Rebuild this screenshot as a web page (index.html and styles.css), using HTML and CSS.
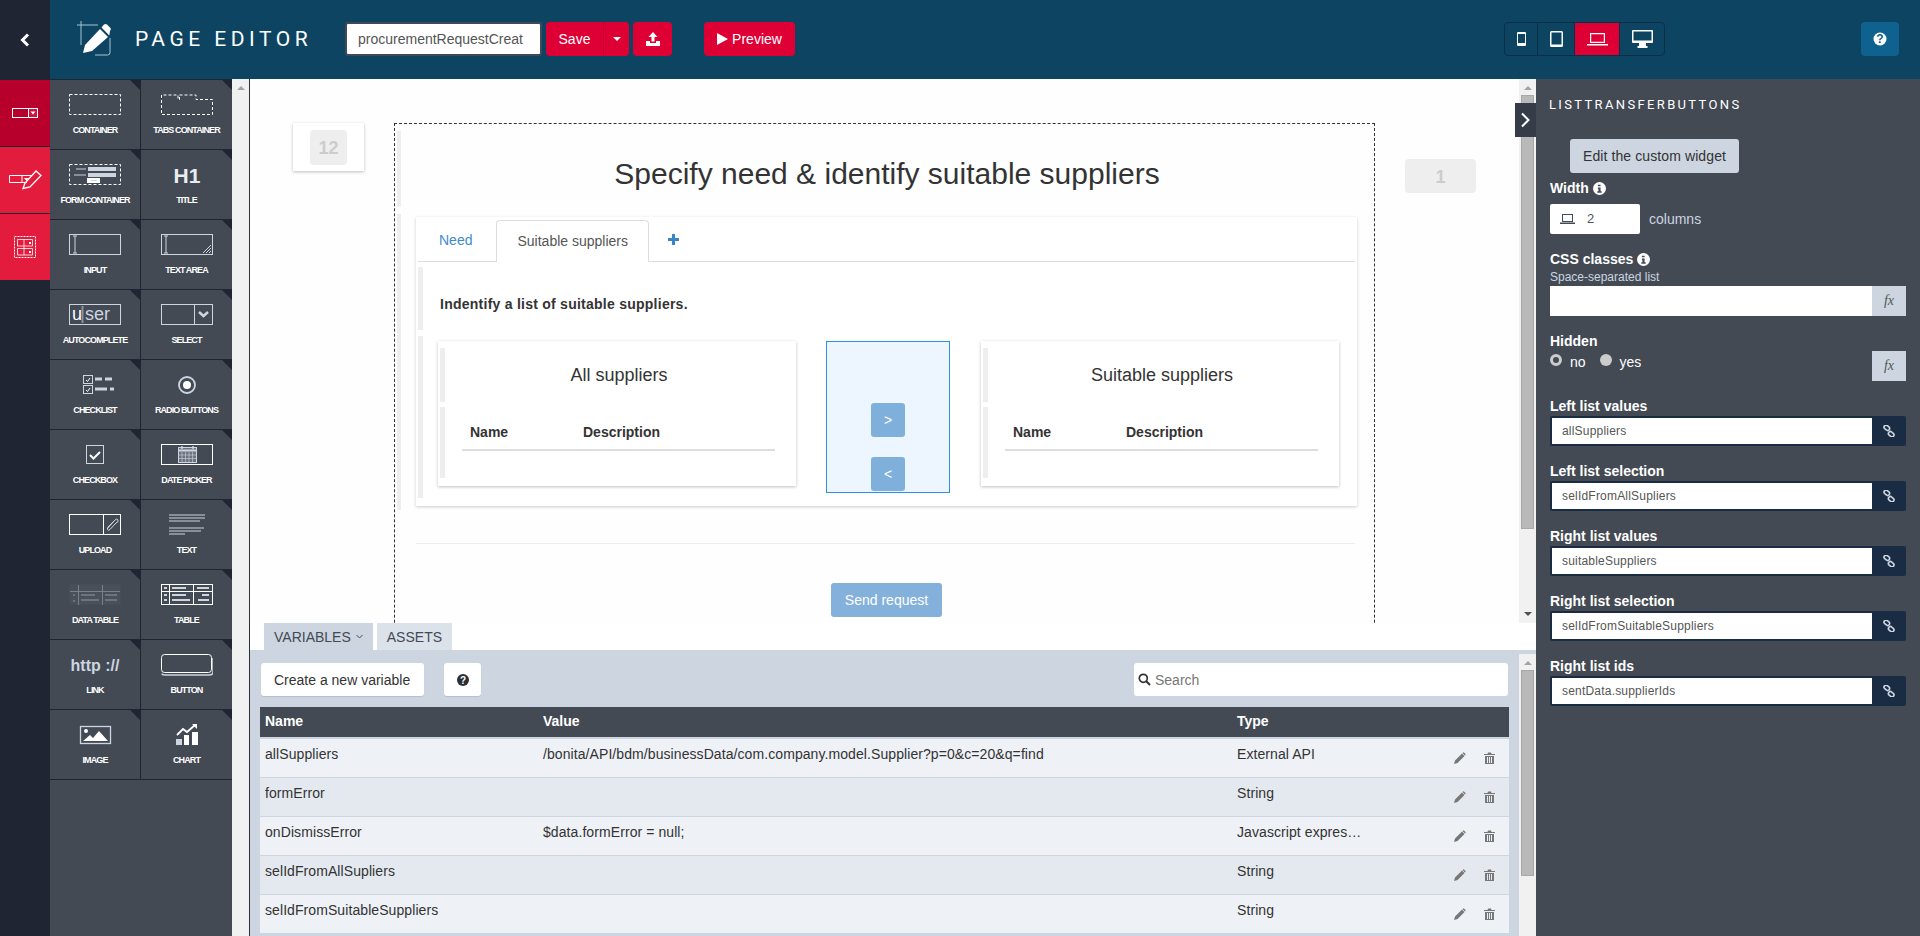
FILE: index.html
```html
<!DOCTYPE html>
<html lang="en">

<head>
    <meta charset="UTF-8">
    <title>Page editor</title>
    <link rel="stylesheet" href="styles.css">
</head>

<body>
    <div class="topbar">
        <div class="back">
            <svg width="12" height="14" viewBox="0 0 12 14"><path d="M9 1.500 3.500 7 9 12.500" fill="none" stroke="#fff" stroke-width="3"/></svg>
        </div>
        <svg class="logo" width="36" height="36" viewBox="0 0 36 36">
            <path d="M1 5H22M5 1V25" fill="none" stroke="#a9c4d4" stroke-width="1"/>
            <path d="M19 35H31.500Q34 35 34 32.500V18" fill="none" stroke="#a9c4d4" stroke-width="1"/>
            <path d="M7 33 9 25 24 9 32 17 16 31Z M25.500 7.500 28 4.500Q29.500 3.500 31 4.500L34.500 8Q35.500 9.500 34 11L33.300 15.500Z" fill="#fff"/>
        </svg>
        <div class="app-name">PAGE EDITOR</div>
        <input class="page-name" type="text" value="procurementRequestCreat">
        <div class="btn-group">
            <button class="btn-red btn-save">Save</button>
            <button class="btn-red btn-caret"><span class="caret"></span></button>
        </div>
        <button class="btn-red btn-export">
            <svg width="14" height="14" viewBox="0 0 14 14"><path d="M7 0 11.500 5H8.500V9.500H5.500V5H2.500Z M0 9H4V11H10V9H14V14H0Z" fill="#fff"/></svg>
        </button>
        <button class="btn-red btn-preview"><span class="play"></span>Preview</button>
        <div class="devices">
            <div class="device dev-phone">
                <svg width="9" height="14" viewBox="0 0 9 14"><path d="M1 0H8Q9 0 9 1V13Q9 14 8 14H1Q0 14 0 13V1Q0 0 1 0ZM1 2V11H8V2Z" fill="#fff" fill-rule="evenodd"/></svg>
            </div>
            <div class="device dev-tablet">
                <svg width="13" height="16" viewBox="0 0 13 16"><path d="M1.500 0H11.500Q13 0 13 1.500V14.500Q13 16 11.500 16H1.500Q0 16 0 14.500V1.500Q0 0 1.500 0ZM1.500 1.500V13.500H11.500V1.500Z" fill="#fff" fill-rule="evenodd"/></svg>
            </div>
            <div class="device dev-laptop">
                <svg width="21" height="14" viewBox="0 0 21 14"><path d="M3 1H18V11H3ZM4.200 2.200V9.800H16.800V2.200Z M0 12H21V13.500H0Z" fill="#fff" fill-rule="evenodd"/></svg>
            </div>
            <div class="device dev-desktop">
                <svg width="21" height="18" viewBox="0 0 21 18"><path d="M1 0H20Q21 0 21 1V12Q21 13 20 13H1Q0 13 0 12V1Q0 0 1 0ZM1.500 1.500V10.500H19.500V1.500Z" fill="#fff" fill-rule="evenodd"/><path d="M7 13H14V16H15.500V18H5.500V16H7Z" fill="#fff"/></svg>
            </div>
        </div>
        <div class="help-btn">
            <svg width="14" height="14" viewBox="0 0 14 14"><circle cx="7" cy="7" r="6.500" fill="#fff"/><text x="7" y="11" text-anchor="middle" class="icon-q">?</text></svg>
        </div>
    </div>

    <div class="main">
        <div class="rail">
            <div class="rail-item rail-dark">
                <svg width="26" height="12" viewBox="0 0 26 12"><rect x="0.500" y="1.500" width="25" height="9" fill="none" stroke="#fff"/><rect x="16" y="1" width="10" height="10" fill="#fff"/><rect x="17" y="2" width="8" height="8" fill="#d0103f"/><path d="M18.500 4.500H23.500L21 7.500Z" fill="#fff"/></svg>
            </div>
            <div class="rail-item">
                <svg width="33" height="20" viewBox="0 0 33 20"><path d="M23 5.500H.5V12.500H18M13 5.500V12.500" fill="none" stroke="#fff"/><path d="M15 8H20L17.500 11Z" fill="#fff"/><path d="M14 18.500 16 13 27 1 32 5.500 21 17Z" fill="none" stroke="#fff" stroke-width="1.300"/></svg>
            </div>
            <div class="rail-item">
                <svg width="22" height="22" viewBox="0 0 22 22"><rect x="0.500" y="0.500" width="21" height="21" fill="none" stroke="#fff" stroke-dasharray="2 1"/><path d="M3.500 3.500H18.500V10H3.500ZM3.500 12.500H18.500V19H3.500ZM10 3.500V19" fill="none" stroke="#fff" stroke-width=".8"/><rect x="15" y="6" width="2" height="2" fill="#fff"/><rect x="15" y="15" width="2" height="2" fill="#fff"/></svg>
            </div>
        </div>

        <div class="palette">
            <div class="widgets">
                <div class="widget">
                    <svg width="52" height="22" viewBox="0 0 52 22"><rect x="0.500" y="0.500" width="51" height="20" fill="none" stroke="#fff" stroke-dasharray="3 2"/></svg>
                    <span>Container</span>
                </div>
                <div class="widget">
                    <svg width="52" height="22" viewBox="0 0 52 22"><path d="M0.500 1V20.500H51.500V5.500H35V1H18.500V5.500H17V1Z" fill="none" stroke="#fff" stroke-dasharray="3 2"/></svg>
                    <span>Tabs container</span>
                </div>
                <div class="widget">
                    <svg width="52" height="22" viewBox="0 0 52 22"><rect x="0.500" y="0.500" width="51" height="20" fill="none" stroke="#fff" stroke-dasharray="3 2"/><rect x="19" y="3" width="28" height="4" fill="#ccd5e0"/><rect x="19" y="9" width="28" height="4" fill="#ccd5e0"/><path d="M7 5H17M5 11H17" stroke="#ccd5e0"/><rect x="18" y="14" width="13" height="5" fill="#fff"/><rect x="22" y="16" width="6" height="1" fill="#ccd5e0"/></svg>
                    <span>Form container</span>
                </div>
                <div class="widget">
                    <svg width="52" height="22" viewBox="0 0 52 22"><text x="26" y="19" text-anchor="middle" class="icon-h1">H1</text></svg>
                    <span>Title</span>
                </div>
                <div class="widget">
                    <svg width="52" height="22" viewBox="0 0 52 22"><rect x="0.500" y="0.500" width="51" height="20" fill="none" stroke="#ccd5e0"/><path d="M6 2V19M4 2H8M4 19H8" stroke="#ccd5e0" fill="none"/></svg>
                    <span>Input</span>
                </div>
                <div class="widget">
                    <svg width="52" height="22" viewBox="0 0 52 22"><rect x="0.500" y="0.500" width="51" height="20" fill="none" stroke="#ccd5e0"/><path d="M5 2V19M3 2H7M3 19H7M42 19 50 11M45 19 50 14M48 19 50 17" stroke="#ccd5e0" fill="none"/></svg>
                    <span>Text area</span>
                </div>
                <div class="widget">
                    <svg width="52" height="22" viewBox="0 0 52 22"><rect x="0.500" y="0.500" width="51" height="20" fill="none" stroke="#ccd5e0"/><text x="3" y="16" class="icon-user">u</text><text x="16" y="16" class="icon-user icon-dim">ser</text><path d="M13.500 2V19" stroke="#8a929c" stroke-width="2"/></svg>
                    <span>Autocomplete</span>
                </div>
                <div class="widget">
                    <svg width="52" height="22" viewBox="0 0 52 22"><rect x="0.500" y="0.500" width="51" height="20" fill="none" stroke="#ccd5e0"/><path d="M33.500 1V20" stroke="#ccd5e0"/><path d="M38 8 42.500 12 47 8" fill="none" stroke="#ccd5e0" stroke-width="2.500"/></svg>
                    <span>Select</span>
                </div>
                <div class="widget">
                    <svg width="52" height="22" viewBox="0 0 52 22"><rect x="14.500" y="1.500" width="9" height="8" fill="none" stroke="#ccd5e0"/><rect x="14.500" y="11.500" width="9" height="8" fill="none" stroke="#ccd5e0"/><path d="M17 6 18.500 7.500 21 4M17 16 18.500 17.500 21 14" fill="none" stroke="#fff"/><path d="M26 5H33M36 5H43M26 15H38M41 15H45" stroke="#ccd5e0" stroke-width="3"/></svg>
                    <span>Checklist</span>
                </div>
                <div class="widget">
                    <svg width="52" height="22" viewBox="0 0 52 22"><circle cx="26" cy="11" r="8" fill="none" stroke="#ccd5e0" stroke-width="1.800"/><circle cx="26" cy="11" r="4" fill="#fff"/></svg>
                    <span>Radio buttons</span>
                </div>
                <div class="widget">
                    <svg width="52" height="22" viewBox="0 0 52 22"><rect x="17.500" y="1.500" width="17" height="18" fill="none" stroke="#ccd5e0"/><path d="M21 11 24.500 14.500 31 8" fill="none" stroke="#fff" stroke-width="2"/></svg>
                    <span>Checkbox</span>
                </div>
                <div class="widget">
                    <svg width="52" height="22" viewBox="0 0 52 22"><rect x="0.500" y="0.500" width="51" height="20" fill="none" stroke="#fff"/><rect x="17.500" y="3.500" width="18" height="15" fill="#6d747e" stroke="#ccd5e0"/><path d="M17 6.500H36" stroke="#ccd5e0" stroke-width="2"/><path d="M21 2V5M32 2V5" stroke="#ccd5e0" stroke-width="1.500"/><path d="M21 8V18M24.500 8V18M28 8V18M31.500 8V18M18 11H35M18 14.500H35" stroke="#ccd5e0" stroke-width="0.600"/></svg>
                    <span>Date picker</span>
                </div>
                <div class="widget">
                    <svg width="52" height="22" viewBox="0 0 52 22"><rect x="0.500" y="0.500" width="51" height="20" fill="none" stroke="#fff"/><path d="M34.500 1V20" stroke="#fff"/><path d="M38 15 46 6Q48 4 49 6T47 9L41 15.500Q39 17 38.500 15.500T40 12L45 7" fill="none" stroke="#ccd5e0"/></svg>
                    <span>Upload</span>
                </div>
                <div class="widget">
                    <svg width="52" height="22" viewBox="0 0 52 22"><path d="M8 1H44M8 4H44M8 7H39M8 14H43M8 17H40M8 20H24" stroke="#ccd5e0" stroke-width="1"/></svg>
                    <span>Text</span>
                </div>
                <div class="widget">
                    <svg width="52" height="22" viewBox="0 0 52 22"><rect x="0.500" y="0.500" width="51" height="20" fill="#4a5059"/><path d="M1 7.500H51M9.500 1V21M33.500 1V21" stroke="#7a808a"/><path d="M4 11H6M4 17H6M12 11H26M12 16H30M36 11H48M36 16H48" stroke="#7a808a" stroke-width="1.500"/></svg>
                    <span>Data table</span>
                </div>
                <div class="widget">
                    <svg width="52" height="22" viewBox="0 0 52 22"><rect x="0.500" y="0.500" width="51" height="20" fill="none" stroke="#fff"/><path d="M1 7.500H51M8.500 1V20M32.500 1V20" stroke="#fff"/><path d="M3 4H6M3 11H6M3 16H6M11 4H25M11 11H25M11 16H29M36 4H48M41 11H48M37 16H48" stroke="#ccd5e0" stroke-width="2"/></svg>
                    <span>Table</span>
                </div>
                <div class="widget">
                    <svg width="52" height="22" viewBox="0 0 52 22"><text x="26" y="17" text-anchor="middle" class="icon-http">http ://</text></svg>
                    <span>Link</span>
                </div>
                <div class="widget">
                    <svg width="52" height="22" viewBox="0 0 52 22"><rect x="0.500" y="0.500" width="50" height="18" rx="3" fill="none" stroke="#fff"/><path d="M1 19.500Q1 21 4 21H48Q52 21 52 18V4" fill="none" stroke="#ccd5e0" stroke-width="1.500"/></svg>
                    <span>Button</span>
                </div>
                <div class="widget">
                    <svg width="52" height="22" viewBox="0 0 52 22"><rect x="11.500" y="2.500" width="30" height="17" fill="none" stroke="#ccd5e0" stroke-width="1.300"/><circle cx="17" cy="7" r="2" fill="#fff"/><path d="M14 17 21 11 24 14 30 7 39 17Z" fill="#fff"/></svg>
                    <span>Image</span>
                </div>
                <div class="widget">
                    <svg width="52" height="22" viewBox="0 0 52 22"><rect x="15" y="15" width="6" height="6" fill="#ccd5e0"/><rect x="23" y="11" width="5" height="10" fill="#fff"/><rect x="31" y="8" width="6" height="13" fill="#fff"/><path d="M16 11 22 5 26 8 34 1" fill="none" stroke="#fff" stroke-width="1.800"/><path d="M31 0H36V5Z" fill="#fff"/></svg>
                    <span>Chart</span>
                </div>
            </div>
            <div class="palette-scroll"><span class="arrow-up"></span></div>
        </div>

        <div class="center">
            <div class="canvas">
                <div class="canvas-inner">
                    <div class="size-left"><div class="size-num">12</div></div>
                    <div class="page">
                        <div class="row row-title">
                            <div class="page-title">Specify need &amp; identify suitable suppliers</div>
                        </div>
                        <div class="row row-tabs">
                            <div class="tabs-card">
                                <div class="tabs-nav">
                                    <div class="tab">Need</div>
                                    <div class="tab tab-active">Suitable suppliers</div>
                                    <div class="tab-add">
                                        <svg width="11" height="11" viewBox="0 0 11 11"><path d="M5.500 0V11M0 5.500H11" stroke="#3b84c8" stroke-width="3"/></svg>
                                    </div>
                                </div>
                                <div class="row row-intro"><b>Indentify a list of suitable suppliers.</b></div>
                                <div class="row row-lists">
                                    <div class="list-card">
                                        <div class="row list-title">All suppliers</div>
                                        <div class="row list-table">
                                            <div class="list-head"><b class="col-name">Name</b><b>Description</b></div>
                                        </div>
                                    </div>
                                    <div class="transfer">
                                        <div class="transfer-btn">&gt;</div>
                                        <div class="transfer-btn">&lt;</div>
                                    </div>
                                    <div class="list-card">
                                        <div class="row list-title">Suitable suppliers</div>
                                        <div class="row list-table">
                                            <div class="list-head"><b class="col-name">Name</b><b>Description</b></div>
                                        </div>
                                    </div>
                                </div>
                            </div>
                        </div>
                        <div class="page-divider"></div>
                        <div class="send-wrap"><div class="send-btn">Send request</div></div>
                    </div>
                    <div class="size-right">1</div>
                </div>
                <div class="vscroll">
                    <span class="arrow-up"></span>
                    <div class="thumb thumb-canvas"></div>
                    <span class="arrow-down"></span>
                </div>
                <div class="panel-handle">
                    <svg width="11" height="16" viewBox="0 0 11 16"><path d="M2 1.500 8.500 8 2 14.500" fill="none" stroke="#fff" stroke-width="2"/></svg>
                </div>
            </div>

            <div class="bottom-tabs">
                <div class="bottom-tab bottom-tab-active">VARIABLES <svg width="7" height="5" viewBox="0 0 7 5"><path d="M.5 1 3.500 4 6.500 1" fill="none" stroke="#434a54"/></svg></div>
                <div class="bottom-tab">ASSETS</div>
            </div>

            <div class="bottom">
                <div class="bottom-content">
                    <div class="toolbar">
                        <div class="tool-btn">Create a new variable</div>
                        <div class="tool-btn tool-help">
                            <svg width="14" height="14" viewBox="0 0 14 14"><circle cx="7" cy="7" r="6" fill="#2b2f36"/><text x="7" y="10.500" text-anchor="middle" class="icon-q icon-q-light">?</text></svg>
                        </div>
                        <div class="search">
                            <svg width="13" height="13" viewBox="0 0 13 13"><circle cx="5.300" cy="5.300" r="4" fill="none" stroke="#333" stroke-width="1.700"/><path d="M8.300 8.300 12 12" stroke="#333" stroke-width="2"/></svg>
                            Search
                        </div>
                    </div>
                    <table class="vars">
                        <thead>
                            <tr><th class="c-name">Name</th><th class="c-value">Value</th><th class="c-type">Type</th><th></th></tr>
                        </thead>
                        <tbody>
                            <tr>
                                <td>allSuppliers</td>
                                <td>/bonita/API/bdm/businessData/com.company.model.Supplier?p=0&amp;c=20&amp;q=find</td>
                                <td>External API</td>
                                <td>
                                    <div class="actions">
                                        <svg width="12" height="12" viewBox="0 0 12 12"><path d="M0 12 1 8.500 8 1.500 10.500 4 3.500 11ZM8.800 .7Q9.500 0 10.200 .7L11.300 1.800Q12 2.500 11.300 3.200L11 3.500 8.500 1Z" fill="#777"/></svg>
                                        <svg width="11" height="12" viewBox="0 0 11 12"><path d="M0 2H3.500L4 .5H7L7.500 2H11V3H0ZM1 4H10V12H1ZM3 5V11H4V5ZM5 5V11H6V5ZM7 5V11H8V5Z" fill="#777" fill-rule="evenodd"/></svg>
                                    </div>
                                </td>
                            </tr>
                            <tr>
                                <td>formError</td>
                                <td></td>
                                <td>String</td>
                                <td>
                                    <div class="actions">
                                        <svg width="12" height="12" viewBox="0 0 12 12"><path d="M0 12 1 8.500 8 1.500 10.500 4 3.500 11ZM8.800 .7Q9.500 0 10.200 .7L11.300 1.800Q12 2.500 11.300 3.200L11 3.500 8.500 1Z" fill="#777"/></svg>
                                        <svg width="11" height="12" viewBox="0 0 11 12"><path d="M0 2H3.500L4 .5H7L7.500 2H11V3H0ZM1 4H10V12H1ZM3 5V11H4V5ZM5 5V11H6V5ZM7 5V11H8V5Z" fill="#777" fill-rule="evenodd"/></svg>
                                    </div>
                                </td>
                            </tr>
                            <tr>
                                <td>onDismissError</td>
                                <td>$data.formError = null;</td>
                                <td>Javascript expres…</td>
                                <td>
                                    <div class="actions">
                                        <svg width="12" height="12" viewBox="0 0 12 12"><path d="M0 12 1 8.500 8 1.500 10.500 4 3.500 11ZM8.800 .7Q9.500 0 10.200 .7L11.300 1.800Q12 2.500 11.300 3.200L11 3.500 8.500 1Z" fill="#777"/></svg>
                                        <svg width="11" height="12" viewBox="0 0 11 12"><path d="M0 2H3.500L4 .5H7L7.500 2H11V3H0ZM1 4H10V12H1ZM3 5V11H4V5ZM5 5V11H6V5ZM7 5V11H8V5Z" fill="#777" fill-rule="evenodd"/></svg>
                                    </div>
                                </td>
                            </tr>
                            <tr>
                                <td>selIdFromAllSupliers</td>
                                <td></td>
                                <td>String</td>
                                <td>
                                    <div class="actions">
                                        <svg width="12" height="12" viewBox="0 0 12 12"><path d="M0 12 1 8.500 8 1.500 10.500 4 3.500 11ZM8.800 .7Q9.500 0 10.200 .7L11.300 1.800Q12 2.500 11.300 3.200L11 3.500 8.500 1Z" fill="#777"/></svg>
                                        <svg width="11" height="12" viewBox="0 0 11 12"><path d="M0 2H3.500L4 .5H7L7.500 2H11V3H0ZM1 4H10V12H1ZM3 5V11H4V5ZM5 5V11H6V5ZM7 5V11H8V5Z" fill="#777" fill-rule="evenodd"/></svg>
                                    </div>
                                </td>
                            </tr>
                            <tr>
                                <td>selIdFromSuitableSuppliers</td>
                                <td></td>
                                <td>String</td>
                                <td>
                                    <div class="actions">
                                        <svg width="12" height="12" viewBox="0 0 12 12"><path d="M0 12 1 8.500 8 1.500 10.500 4 3.500 11ZM8.800 .7Q9.500 0 10.200 .7L11.300 1.800Q12 2.500 11.300 3.200L11 3.500 8.500 1Z" fill="#777"/></svg>
                                        <svg width="11" height="12" viewBox="0 0 11 12"><path d="M0 2H3.500L4 .5H7L7.500 2H11V3H0ZM1 4H10V12H1ZM3 5V11H4V5ZM5 5V11H6V5ZM7 5V11H8V5Z" fill="#777" fill-rule="evenodd"/></svg>
                                    </div>
                                </td>
                            </tr>
                        </tbody>
                    </table>
                </div>
                <div class="vscroll vscroll-bottom">
                    <span class="arrow-up"></span>
                    <div class="thumb thumb-bottom"></div>
                </div>
            </div>
        </div>

        <div class="props">
            <div class="props-title">LISTTRANSFERBUTTONS</div>
            <div class="edit-btn">Edit the custom widget</div>

            <div class="field field-width">
                <div class="field-label">Width
                    <svg width="13" height="13" viewBox="0 0 12 12"><circle cx="6" cy="6" r="6" fill="#fff"/><path d="M4.500 2.500H7V4H4.500ZM4.500 5H7V8.500H8V10H4V8.500H5V6.500H4.500Z" fill="#434a54"/></svg>
                </div>
                <div class="width-row">
                    <div class="width-input">
                        <svg width="15" height="10" viewBox="0 0 15 10"><path d="M2 0H13V8H2ZM3 1V7H12V1Z M0 8.500H15V10H0Z" fill="#434a54" fill-rule="evenodd"/></svg>
                        <span>2</span>
                    </div>
                    <span class="width-unit">columns</span>
                </div>
            </div>

            <div class="field">
                <div class="field-label">CSS classes
                    <svg width="13" height="13" viewBox="0 0 12 12"><circle cx="6" cy="6" r="6" fill="#fff"/><path d="M4.500 2.500H7V4H4.500ZM4.500 5H7V8.500H8V10H4V8.500H5V6.500H4.500Z" fill="#434a54"/></svg>
                </div>
                <div class="field-hint">Space-separated list</div>
                <div class="input-group">
                    <div class="input-box"></div>
                    <div class="addon addon-fx">fx</div>
                </div>
            </div>

            <div class="field">
                <div class="field-label">Hidden</div>
                <div class="hidden-row">
                    <span class="radio radio-on"></span><span class="radio-text">no</span>
                    <span class="radio"></span><span class="radio-text">yes</span>
                    <div class="addon addon-fx addon-alone">fx</div>
                </div>
            </div>

            <div class="field">
                <div class="field-label">Left list values</div>
                <div class="input-group input-bound">
                    <div class="input-box">allSuppliers</div>
                    <div class="addon addon-link">
                        <svg width="12" height="12" viewBox="0 0 12 12"><g fill="none" stroke="#ccd5e0" stroke-width="1.600"><rect x="0.800" y="0.800" width="6" height="4" rx="2" transform="rotate(40 3.800 2.800)"/><rect x="5.200" y="7.200" width="6" height="4" rx="2" transform="rotate(40 8.200 9.200)"/></g></svg>
                    </div>
                </div>
            </div>
            <div class="field">
                <div class="field-label">Left list selection</div>
                <div class="input-group input-bound">
                    <div class="input-box">selIdFromAllSupliers</div>
                    <div class="addon addon-link">
                        <svg width="12" height="12" viewBox="0 0 12 12"><g fill="none" stroke="#ccd5e0" stroke-width="1.600"><rect x="0.800" y="0.800" width="6" height="4" rx="2" transform="rotate(40 3.800 2.800)"/><rect x="5.200" y="7.200" width="6" height="4" rx="2" transform="rotate(40 8.200 9.200)"/></g></svg>
                    </div>
                </div>
            </div>
            <div class="field">
                <div class="field-label">Right list values</div>
                <div class="input-group input-bound">
                    <div class="input-box">suitableSuppliers</div>
                    <div class="addon addon-link">
                        <svg width="12" height="12" viewBox="0 0 12 12"><g fill="none" stroke="#ccd5e0" stroke-width="1.600"><rect x="0.800" y="0.800" width="6" height="4" rx="2" transform="rotate(40 3.800 2.800)"/><rect x="5.200" y="7.200" width="6" height="4" rx="2" transform="rotate(40 8.200 9.200)"/></g></svg>
                    </div>
                </div>
            </div>
            <div class="field">
                <div class="field-label">Right list selection</div>
                <div class="input-group input-bound">
                    <div class="input-box">selIdFromSuitableSuppliers</div>
                    <div class="addon addon-link">
                        <svg width="12" height="12" viewBox="0 0 12 12"><g fill="none" stroke="#ccd5e0" stroke-width="1.600"><rect x="0.800" y="0.800" width="6" height="4" rx="2" transform="rotate(40 3.800 2.800)"/><rect x="5.200" y="7.200" width="6" height="4" rx="2" transform="rotate(40 8.200 9.200)"/></g></svg>
                    </div>
                </div>
            </div>
            <div class="field">
                <div class="field-label">Right list ids</div>
                <div class="input-group input-bound">
                    <div class="input-box">sentData.supplierIds</div>
                    <div class="addon addon-link">
                        <svg width="12" height="12" viewBox="0 0 12 12"><g fill="none" stroke="#ccd5e0" stroke-width="1.600"><rect x="0.800" y="0.800" width="6" height="4" rx="2" transform="rotate(40 3.800 2.800)"/><rect x="5.200" y="7.200" width="6" height="4" rx="2" transform="rotate(40 8.200 9.200)"/></g></svg>
                    </div>
                </div>
            </div>
        </div>
    </div>
</body>

</html>
```

FILE: styles.css
```css
* {
    box-sizing: border-box;
}

html,
body {
    margin: 0;
    height: 100%;
    overflow: hidden;
}

body {
    display: flex;
    flex-direction: column;
    font-family: "Liberation Sans", Arial, sans-serif;
    font-size: 14px;
    line-height: 20px;
    color: #333;
    background-color: #fff;
}

button {
    font: inherit;
    border: 0;
    padding: 0;
}

svg {
    display: block;
    letter-spacing: 0;
}

/* svg glyph text */
.icon-q {
    font: bold 12px "Liberation Sans", sans-serif;
    fill: #0f6190;
}

.icon-q-light {
    font-size: 10px;
    fill: #fff;
}

.icon-h1 {
    font: bold 21px "Liberation Sans", sans-serif;
    fill: #e8edf2;
}

.icon-user {
    font: 18px "Liberation Sans", sans-serif;
    fill: #fff;
}

.icon-dim {
    fill: #ccd5e0;
}

.icon-http {
    font: bold 16px "Liberation Sans", sans-serif;
    fill: #ccd5e0;
}

/* top bar */
.topbar {
    flex: none;
    display: flex;
    align-items: center;
    height: 79px;
    padding-bottom: 1px;
    background-color: #0d4462;
}

.back {
    display: flex;
    align-items: center;
    justify-content: center;
    align-self: stretch;
    width: 50px;
    margin-bottom: -1px;
    background-color: #1f2533;
}

.logo {
    margin: -2px 0 0 26px;
}

.app-name {
    width: 210px;
    margin-left: 23px;
    color: #fff;
    font-family: Roboto, sans-serif;
    font-size: 21px;
    letter-spacing: 4.5px;
}

.page-name {
    width: 197px;
    height: 34px;
    padding: 0 11px;
    border: 2px solid #3e4a58;
    border-radius: 3px;
    font: inherit;
    color: #555;
}

.btn-group {
    display: flex;
    margin-left: 4px;
}

.btn-red {
    height: 34px;
    color: #fff;
    background-color: #de0035;
    border-radius: 4px;
}

.btn-save {
    width: 58px;
    border-radius: 4px 0 0 4px;
    border-right: 1px solid #c2002e;
}

.btn-caret {
    display: flex;
    align-items: center;
    justify-content: center;
    width: 25px;
    border-radius: 0 4px 4px 0;
}

.caret {
    border-top: 4px solid #fff;
    border-left: 4px solid transparent;
    border-right: 4px solid transparent;
}

.btn-export {
    display: flex;
    align-items: center;
    justify-content: center;
    width: 39px;
    margin-left: 4px;
}

.btn-preview {
    display: flex;
    align-items: center;
    justify-content: center;
    gap: 4px;
    width: 91px;
    margin-left: 32px;
}

.play {
    border-left: 11px solid #fff;
    border-top: 6px solid transparent;
    border-bottom: 6px solid transparent;
}

.devices {
    display: flex;
    height: 34px;
    margin-left: 709px;
    border: 1px solid #0b2f49;
    border-radius: 4px;
}

.device {
    display: flex;
    align-items: center;
    justify-content: center;
    border-right: 1px solid #0b2f49;
}

.dev-phone {
    width: 33px;
}

.dev-tablet {
    width: 37px;
}

.dev-laptop {
    width: 45px;
    background-color: #de0035;
}

.dev-desktop {
    width: 44px;
    border-right: 0;
}

.help-btn {
    display: flex;
    align-items: center;
    justify-content: center;
    width: 38px;
    height: 34px;
    margin-left: 196px;
    background-color: #0f6190;
    border-radius: 4px;
}

/* main columns */
.main {
    flex: 1;
    display: flex;
    min-height: 0;
}

.rail {
    flex: none;
    width: 50px;
    padding-top: 1px;
    background-color: #1f2533;
}

.rail-item {
    display: flex;
    align-items: center;
    justify-content: center;
    height: 66px;
    margin-bottom: 1px;
    background-color: #e31b3d;
}

.rail-dark {
    background-color: #b8002c;
}

.palette {
    flex: none;
    display: flex;
    width: 200px;
    background-color: #434a54;
    border-right: 1px solid #2b2f36;
}

.widgets {
    display: grid;
    grid-template-columns: 91px 91px;
    grid-auto-rows: 70px;
    width: 182px;
    align-content: start;
}

.widget {
    position: relative;
    display: flex;
    flex-direction: column;
    align-items: center;
    padding-top: 14px;
    border-top: 1px solid #1f2533;
    border-right: 1px solid #1f2533;
    color: #fff;
    font-size: 9px;
    letter-spacing: -0.9px;
    line-height: 12px;
}

.widget:nth-child(2n) {
    border-right: 0;
}

.widget:nth-last-child(-n+2) {
    height: 71px;
    border-bottom: 1px solid #1f2533;
}

.widget::after {
    content: "";
    position: absolute;
    top: 0;
    right: 0;
    border-top: 10px solid #1f2533;
    border-left: 10px solid transparent;
}

.widget span {
    margin-top: 8px;
    text-transform: uppercase;
    font-weight: bold;
}

.palette-scroll {
    flex: 1;
    padding-top: 7px;
    background-color: #f1f1f1;
    text-align: center;
}

.arrow-up,
.arrow-down {
    display: block;
    width: 0;
    margin: 0 auto;
    border-left: 4px solid transparent;
    border-right: 4px solid transparent;
}

.arrow-up {
    border-bottom: 4px solid #a3a3a3;
}

.arrow-down {
    margin-top: auto;
    border-top: 4px solid #505050;
}

/* center column */
.center {
    flex: 1;
    display: flex;
    flex-direction: column;
    min-width: 0;
}

.canvas {
    position: relative;
    flex: none;
    display: flex;
    height: 544px;
    overflow: hidden;
    background-color: #fefefe;
}

.canvas-inner {
    flex: 1;
    display: flex;
    align-items: flex-start;
    padding: 44px 0 0 43px;
    min-width: 0;
}

.size-left {
    flex: none;
    display: flex;
    align-items: center;
    justify-content: center;
    width: 71px;
    height: 48px;
    background-color: #fff;
    box-shadow: 0 1px 3px rgba(0, 0, 0, .25);
}

.size-num {
    width: 37px;
    height: 35px;
    background-color: #eee;
    border-radius: 4px;
    color: #ccc;
    font-size: 18px;
    font-weight: bold;
    line-height: 37px;
    text-align: center;
}

.page {
    flex: none;
    width: 981px;
    height: 600px;
    margin-left: 30px;
    padding: 7px 0 0 2px;
    border: 1px dashed #333;
}

.size-right {
    flex: none;
    width: 71px;
    height: 34px;
    margin: 36px 0 0 30px;
    background-color: #eee;
    border-radius: 4px;
    color: #ccc;
    font-size: 18px;
    font-weight: bold;
    line-height: 36px;
    text-align: center;
}

.row {
    border-left: 5px solid #eee;
}

.row-title {
    height: 76px;
    margin-bottom: 7px;
    border-left-width: 4px;
}

.page-title {
    padding: 26px 1px 0 0;
    font-size: 30px;
    line-height: 33px;
    text-align: center;
}

.row-tabs {
    height: 296px;
    padding: 3px 0 0 15px;
    border-left-width: 4px;
}

.tabs-card {
    width: 941px;
    height: 289px;
    padding: 3px 2px 0 2px;
    background-color: #fff;
    box-shadow: 0 1px 3px rgba(0, 0, 0, .2);
}

.tabs-nav {
    display: flex;
    height: 42px;
    margin-bottom: 5px;
    border-bottom: 1px solid #ddd;
}

.tab {
    height: 41px;
    margin-right: 3px;
    padding: 10px 21px;
    color: #428bca;
}

.tab-active {
    height: 42px;
    margin-right: 0;
    padding: 10px 20px;
    border: 1px solid #ddd;
    border-bottom: 0;
    border-radius: 4px 4px 0 0;
    background-color: #fff;
    color: #555;
}

.tab-add {
    padding: 14px 0 0 19px;
}

.row-intro {
    height: 63px;
    margin-bottom: 6px;
    padding: 27px 0 0 17px;
    letter-spacing: .25px;
}

.row-lists {
    display: flex;
    height: 162px;
    padding: 5px 0 0 15px;
    gap: 30px;
}

.list-card {
    flex: none;
    width: 358px;
    height: 145px;
    padding: 7px 0 0 2px;
    background-color: #fff;
    box-shadow: 0 1px 3px rgba(0, 0, 0, .25);
}

.list-title {
    height: 54px;
    margin-bottom: 5px;
    padding: 17px 3px 0 0;
    font-size: 18px;
    text-align: center;
}

.list-table {
    height: 71px;
    padding: 15px 21px 0 17px;
}

.list-head {
    display: flex;
    height: 29px;
    padding: 0 8px;
    border-bottom: 2px solid #ddd;
}

.col-name {
    width: 113px;
}

.transfer {
    flex: none;
    display: flex;
    flex-direction: column;
    align-items: center;
    gap: 20px;
    width: 124px;
    height: 152px;
    margin-right: 1px;
    padding-top: 61px;
    background-color: #edf6ff;
    border: 1px solid #2e8fe8;
}

.transfer-btn {
    width: 34px;
    height: 34px;
    background-color: #7fb0dc;
    border-radius: 3px;
    color: #fff;
    line-height: 34px;
    text-align: center;
}

.page-divider {
    width: 939px;
    margin: 33px 0 39px 19px;
    border-top: 1px solid #eee;
}

.send-wrap {
    display: flex;
    justify-content: center;
    padding-left: 2px;
}

.send-btn {
    width: 111px;
    height: 34px;
    background-color: #84b1dc;
    border-radius: 3px;
    color: #fff;
    line-height: 34px;
    text-align: center;
}

.vscroll {
    flex: none;
    display: flex;
    flex-direction: column;
    width: 17px;
    padding: 7px 2px;
    background-color: #f1f1f1;
}

.vscroll-bottom {
    margin-top: 4px;
}

.thumb {
    flex: none;
    margin-top: 5px;
    background-color: #b9b9b9;
    border: 1px solid #a8a8a8;
}

.thumb-canvas {
    height: 434px;
}

.thumb-bottom {
    height: 206px;
}

.panel-handle {
    position: absolute;
    top: 24px;
    right: 0;
    display: flex;
    align-items: center;
    justify-content: center;
    width: 21px;
    height: 34px;
    background-color: #353c48;
}

/* variables panel */
.bottom-tabs {
    flex: none;
    display: flex;
    gap: 4px;
    height: 27px;
    padding-left: 14px;
    background-color: #fff;
}

.bottom-tab {
    display: flex;
    align-items: center;
    gap: 5px;
    padding: 0 10px;
    background-color: #dbe2ea;
    color: #434a54;
}

.bottom-tab-active {
    background-color: #ccd5e0;
}

.bottom {
    flex: 1;
    display: flex;
    min-height: 0;
    overflow: hidden;
    background-color: #ccd5e0;
}

.bottom-content {
    flex: 1;
    min-width: 0;
    padding: 13px 10px 0;
}

.toolbar {
    display: flex;
    align-items: center;
    gap: 20px;
    height: 33px;
    margin: 0 1px 11px;
}

.tool-btn {
    display: flex;
    align-items: center;
    height: 33px;
    padding: 0 12px;
    background-color: #fff;
    border-radius: 3px;
    box-shadow: 0 1px 1px rgba(0, 0, 0, .1);
    color: #333;
}

.tool-btn:first-child {
    padding: 0 14px 0 13px;
}

.tool-help {
    justify-content: center;
    width: 37px;
    padding: 0;
}

.search {
    display: flex;
    align-items: center;
    gap: 4px;
    width: 374px;
    height: 33px;
    margin-left: auto;
    padding: 0 4px;
    background-color: #fff;
    border-radius: 3px;
    color: #777;
}

.vars {
    width: 1249px;
    table-layout: fixed;
    border-collapse: separate;
    border-spacing: 0;
}

.vars th {
    height: 32px;
    padding: 0 5px 2px;
    background-color: #434a54;
    background-clip: padding-box;
    border-bottom: 2px solid #ccd5e0;
    color: #fff;
    text-align: left;
}

.c-name {
    width: 278px;
}

.c-value {
    width: 694px;
}

.c-type {
    width: 135px;
}

.vars td {
    height: 39px;
    padding: 5px 5px 0;
    border-bottom: 1px solid #ccd5e0;
    background-color: #eef1f6;
    letter-spacing: .08px;
    vertical-align: top;
    white-space: nowrap;
}

.vars tr:nth-child(even) td {
    background-color: #e4e9f0;
}

.actions {
    display: flex;
    gap: 18px;
    padding: 8px 0 0 82px;
}

/* properties panel */
.props {
    flex: none;
    width: 384px;
    padding: 16px 14px 0;
    background-color: #434a54;
    color: #fff;
}

.props-title {
    margin-left: -1px;
    font-family: Roboto, sans-serif;
    font-size: 13px;
    letter-spacing: 2.35px;
}

.edit-btn {
    width: 169px;
    height: 34px;
    margin: 24px 0 5px 20px;
    background-color: #ccd5e0;
    border-radius: 3px;
    color: #333;
    letter-spacing: .1px;
    line-height: 34px;
    text-align: center;
}

.field {
    margin-bottom: 15px;
}

.field-label {
    display: flex;
    align-items: center;
    gap: 4px;
    height: 20px;
    font-weight: bold;
}

.field-width .field-label {
    margin-bottom: 6px;
}

.field-hint {
    height: 17px;
    color: #ccd5e0;
    font-size: 12px;
    line-height: 16px;
}

.width-row {
    display: flex;
    align-items: center;
    gap: 9px;
}

.width-input {
    display: flex;
    align-items: center;
    gap: 12px;
    width: 90px;
    height: 30px;
    padding-left: 10px;
    background-color: #fff;
    border-radius: 2px;
    color: #555;
    font-size: 13px;
}

.width-unit {
    color: #ccd5e0;
}

.input-group {
    display: flex;
    height: 30px;
}

.input-box {
    flex: 1;
    padding: 0 10px;
    background-color: #fff;
    color: #555;
    font-size: 12px;
    letter-spacing: .2px;
    line-height: 26px;
}

.addon {
    flex: none;
    display: flex;
    align-items: center;
    justify-content: center;
    width: 34px;
}

.addon-fx {
    background-color: #ccd5e0;
    color: #555;
    font-family: "Liberation Serif", serif;
    font-size: 14px;
    font-style: italic;
}

.addon-alone {
    height: 30px;
    margin-left: auto;
}

.input-bound {
    background-color: #1a2c44;
    border-radius: 2px;
}

.input-bound .input-box {
    margin: 2px 0 2px 2px;
}

.hidden-row {
    display: flex;
    height: 30px;
}

.radio {
    width: 12px;
    height: 12px;
    margin: 3px 8px 0 0;
    background-color: #ccc;
    border-radius: 50%;
}

.radio-on {
    border: 3px solid #ccc;
    background-color: #434a54;
}

.radio-text {
    margin-right: 14px;
    line-height: 22px;
}
```
